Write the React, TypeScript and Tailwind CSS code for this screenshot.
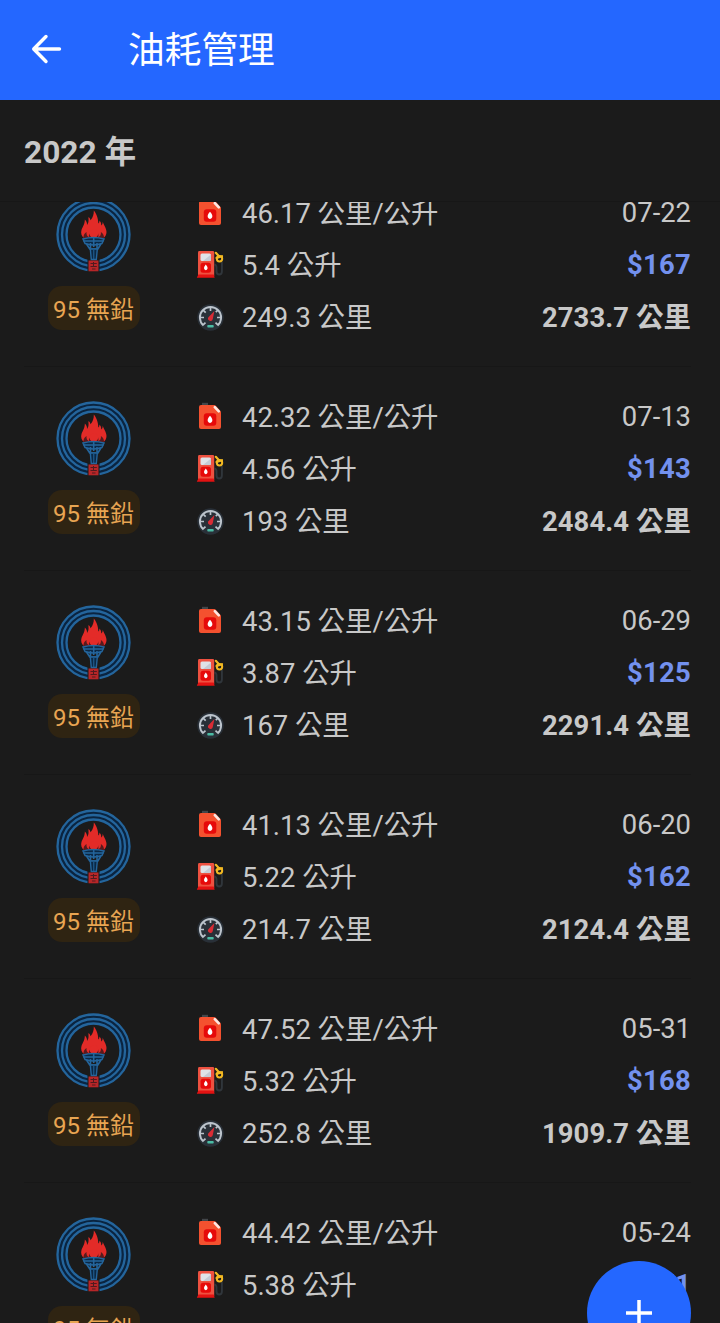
import React from 'react';

interface FuelRecord {
  id: number;
  efficiency: string;
  litres: string;
  distance: string;
  date: string;
  price: string;
  odometer: string;
}

const records: FuelRecord[] = [
  { id: 1, efficiency: '46.17', litres: '5.4', distance: '249.3', date: '07-22', price: '$167', odometer: '2733.7' },
  { id: 2, efficiency: '42.32', litres: '4.56', distance: '193', date: '07-13', price: '$143', odometer: '2484.4' },
  { id: 3, efficiency: '43.15', litres: '3.87', distance: '167', date: '06-29', price: '$125', odometer: '2291.4' },
  { id: 4, efficiency: '41.13', litres: '5.22', distance: '214.7', date: '06-20', price: '$162', odometer: '2124.4' },
  { id: 5, efficiency: '47.52', litres: '5.32', distance: '252.8', date: '05-31', price: '$168', odometer: '1909.7' },
  { id: 6, efficiency: '44.42', litres: '5.38', distance: '239', date: '05-24', price: '$171', odometer: '1656.9' },
];

function StationLogo() {
  return (
    <svg width="76" height="76" viewBox="0 0 76 76" fill="none" className="block">
      {/* Rings */}
      <circle cx="37.500" cy="37.500" r="31.300" stroke="#0a2440" strokeWidth="11" />
      <circle cx="37.500" cy="37.500" r="36" stroke="#24659c" strokeWidth="2.300" />
      <circle cx="37.500" cy="37.500" r="31.500" stroke="#24659c" strokeWidth="2.300" />
      <circle cx="37.500" cy="37.500" r="27" stroke="#24659c" strokeWidth="2.300" />
      <path d="M31.500 61h12v15h-12z" fill="#1b1b1b" />
      {/* Flame */}
      <path
        d="M28.500 41.500C25.500 39.500 24.500 36 25.500 33C26.500 30 29 27 28.800 22.500C30.500 24 31.200 25.800 31 28C33.500 24.500 32.200 22.500 32.500 20C33.800 21 34.300 22 34.500 23.300C36.800 20.500 38 17.500 37.800 13.500C40 16 42.300 20.500 42.300 26.500C43.200 25.800 43.500 25 43.400 23.500C45 25 45.300 26.500 45.200 28.500C46.300 27.500 46.800 26.500 46.700 24.500C47.500 28 50.500 31 50.500 35C50.500 38 49.200 40 47 41.500Z"
        fill="#e32b28"
      />
      <path d="M27.500 41.500q-.5-4.500 3-6.500-.5 4 3 5.500-1-2-.2-4 1 3.500 4.400 4.500 3.400-1 4.400-4.500.8 2-.2 4 3.500-1.500 3-5.500 3.500 2 3 6.500z" fill="#3f181b" opacity=".85" />
      <circle cx="37.800" cy="36.500" r="4.300" fill="#e32b28" />
      {/* Torch */}
      <path d="M27 42q10.500-3 21 0l-2 4.500q-8.500 3-17 0z" fill="#0b2845" stroke="#24659c" strokeWidth="1.500" />
      <path d="M27.500 44h20M30.500 47l3.200 5h8.200l3-5M34.500 46v5M37.700 41v9M41 46v5" stroke="#24659c" strokeWidth="1.600" />
      <path d="M34.300 52h7l-1 10.500h-5z" fill="#0b2845" stroke="#24659c" strokeWidth="1.400" />
      <path d="M37.800 53v9" stroke="#24659c" strokeWidth="1" />
      {/* Handle block */}
      <path d="M32.500 63.500h10v10.800h-10z" fill="#b72628" />
      <path d="M34.500 66.500h6.300M34.500 69.500h6.300M36 72h3.500M37.500 65v4.500" stroke="#511a1e" strokeWidth="1" />
    </svg>
  );
}

function CanIcon() {
  return (
    <svg width="28" height="28" viewBox="0 0 28 28" fill="none" className="block">
      <path d="M6 .8h6v4H6z" fill="#42464a" />
      <path d="M5 3h13q1.200 0 2 .9l4.300 4.900q.7.800.7 1.800V25q0 2-2 2H5q-2 0-2-2V5q0-2 2-2z" fill="#f4512f" />
      <path d="M18.800 5.100l4 4.300" stroke="#fbe9e5" strokeWidth="2.600" strokeLinecap="round" />
      <rect x="7.800" y="11.300" width="12.500" height="12.500" rx="3" fill="#e60a0a" />
      <path d="M14 13.800q3 3.200 2.200 5.400-.8 1.800-2.200 1.800t-2.200-1.800q-.8-2.200 2.200-5.400z" fill="#fff" />
    </svg>
  );
}

function PumpIcon() {
  return (
    <svg width="28" height="28" viewBox="0 1 28 28" fill="none" className="block">
      <path d="M18.500 14.500q2 .3 2 3v4q0 3 2.700 3t2.700-3V12" stroke="#30363b" strokeWidth="1.900" />
      <path d="M2 26V3q0-2.500 2.500-2.500h11.200q2.500 0 2.500 2.500v23z" fill="#ee5140" />
      <path d="M2.300 24.500h15.400l1 3.200H.8z" fill="#e31212" />
      <rect x="4.500" y="3.500" width="10.500" height="7.500" rx="1.500" fill="#dfe3e8" />
      <path d="M7 11l8-6.500V9.500q0 1.500-1.500 1.500z" fill="#c4cbd5" />
      <rect x="4.500" y="12.800" width="10.500" height="10" rx="2.500" fill="#e60a0a" />
      <path d="M9.800 14.500q2.300 2.600 1.700 4.300-.6 1.400-1.700 1.400t-1.700-1.400q-.6-1.700 1.700-4.300z" fill="#fff" />
      <path d="M19.800 2.800l3.200 3.500M20.500 8l5.500-1.800" stroke="#f3b922" strokeWidth="2.200" strokeLinecap="round" />
      <circle cx="23.500" cy="8.800" r="2.700" stroke="#f3b922" strokeWidth="2" />
    </svg>
  );
}

function GaugeIcon() {
  return (
    <svg width="28" height="28" viewBox="-0.5 -0.5 28 28" fill="none" className="block">
      <circle cx="14" cy="14" r="13.200" fill="#293038" />
      <path d="M7 22A10.600 10.600 0 1 1 21 22" stroke="#bcc4cc" strokeWidth="1.900" />
      <path d="M3.500 14h4M24.500 14h-4M14 3.500v4M6.600 6.600l2.600 2.600M21.400 6.600l-2.100 2.100M6.600 21.400l2.400-2.200M21.400 21.400L19 19.200" stroke="#bcc4cc" strokeWidth="1.700" />
      <path d="M17.900 7.500l-1.600 8a2.400 2.400 0 1 1-4.400-1.800z" fill="#d92c35" />
      <rect x="10.800" y="21.500" width="6.400" height="2.500" rx=".8" fill="#4bbba4" />
    </svg>
  );
}

function Metric({ icon, children }: { icon: React.ReactNode; children: React.ReactNode }) {
  return (
    <div className="flex h-[52.400px] items-center">
      <span className="w-[46px]">{icon}</span>
      <span className="pt-1">{children}</span>
    </div>
  );
}

function RecordRow({ record }: { record: FuelRecord }) {
  return (
    <li className="flex h-[204px] border-b border-[#171717] pt-6 whitespace-nowrap">
      <div className="flex w-[139px] flex-col items-center pt-[10px]">
        <StationLogo />
        <span className="mt-[13px] flex h-11 w-[92px] items-center justify-center rounded-[14px] bg-[#2f2412] pt-[3px] text-[24px] text-[#e8a552]">
          95 無鉛
        </span>
      </div>
      <div className="-mt-px ml-[33px] flex-1">
        <Metric icon={<CanIcon />}>{record.efficiency} 公里/公升</Metric>
        <Metric icon={<PumpIcon />}>{record.litres} 公升</Metric>
        <Metric icon={<GaugeIcon />}>{record.distance} 公里</Metric>
      </div>
      <div className="flex flex-col text-right leading-[52.300px]">
        <span>{record.date}</span>
        <span className="font-bold tracking-[0.3px] text-[#7391ee]">{record.price}</span>
        <span className="font-bold tracking-[0.1px]">{record.odometer} 公里</span>
      </div>
    </li>
  );
}

export default function App() {
  return (
    <div className="relative flex h-[1323px] w-[720px] flex-col overflow-hidden bg-[#1b1b1b] font-[Roboto,'Noto_Sans_CJK_TC',sans-serif] text-[27.4px] text-[#c8c8c8]">
      <header className="flex h-[100px] shrink-0 items-center bg-[#2467ff] pl-[31px] text-white">
        <svg width="31" height="30" viewBox="0 0 31 30" fill="none" className="mb-[3px] block">
          <path d="M15 2.500L2.700 15 15 27.500M3 15h25.500" stroke="currentColor" strokeWidth="3.400" strokeLinecap="round" strokeLinejoin="round" />
        </svg>
        <h1 className="ml-[66px] pt-[3px] text-[36.700px] leading-none">油耗管理</h1>
      </header>

      <div className="flex h-[102px] shrink-0 items-center border-b border-[#171717] pt-[5px] pl-6 text-[31.700px] font-bold">
        2022 年
      </div>

      <main className="min-h-0 flex-1 overflow-hidden">
        <ul className="-mt-[39px] pr-[29px] pl-6">
          {records.map(record => (
            <RecordRow key={record.id} record={record} />
          ))}
        </ul>
      </main>

      {/* Add record */}
      <button aria-label="新增" className="absolute top-[1261px] left-[587px] flex size-[104px] items-center justify-center rounded-full bg-[#2467ff] text-white">
        <svg width="26" height="26" viewBox="0 0 26 26" fill="none">
          <path d="M13 0v26M0 13h26" stroke="currentColor" strokeWidth="3.500" />
        </svg>
      </button>
    </div>
  );
}
